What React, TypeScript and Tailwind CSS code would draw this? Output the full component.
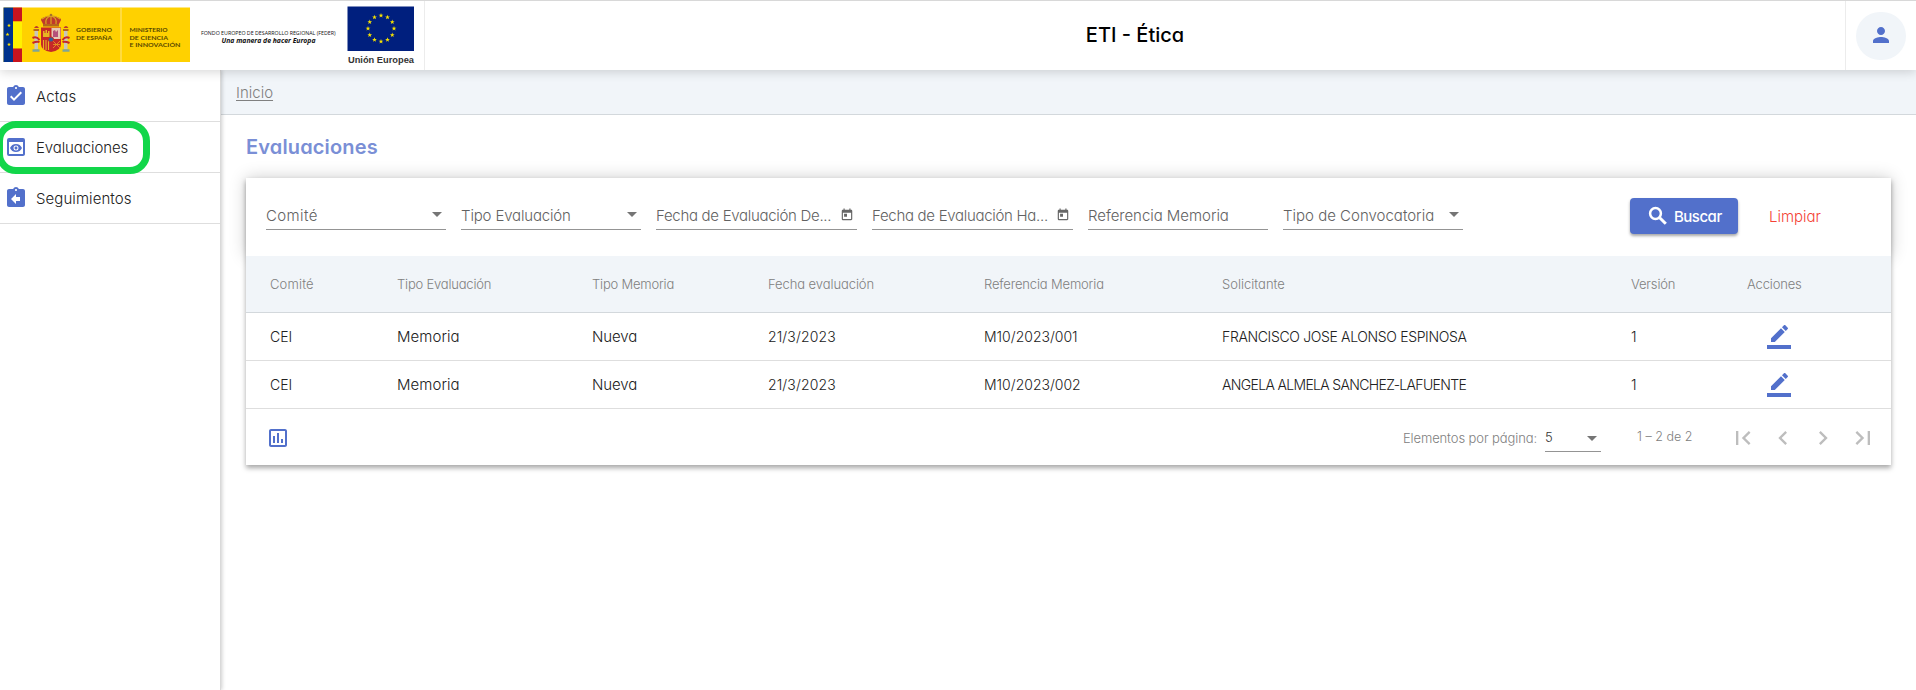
import React from "react";
import {
  MdAssignmentTurnedIn, MdPreview, MdAssignmentReturn, MdPerson, MdToday,
  MdOutlinePoll, MdFirstPage, MdChevronLeft, MdChevronRight, MdLastPage,
} from "react-icons/md";

const stars = Array.from({ length: 12 }, (_, i) => {
  const a = (i * Math.PI) / 6;
  return [191 + 13 * Math.sin(a), 28.5 - 13 * Math.cos(a)];
});

const star = (cx: number, cy: number, r: number) =>
  Array.from({ length: 10 }, (_, i) => {
    const a = (i * Math.PI) / 5;
    const q = i % 2 ? r * 0.42 : r;
    return `${cx + q * Math.sin(a)},${cy - q * Math.cos(a)}`;
  }).join(" ");

function GovernmentLogo() {
  return (
    <svg width="190" height="69" viewBox="0 1 190 69" className="shrink-0">
      <rect x="3.5" y="7.5" width="187" height="54.5" fill="#ffd100" />
      <rect x="3.5" y="7.5" width="9.5" height="54.5" fill="#00338d" />
      <rect x="13" y="7.5" width="9" height="14" fill="#c8141e" />
      <rect x="13" y="21.5" width="9" height="27" fill="#fff100" />
      <rect x="13" y="48.5" width="9" height="13.5" fill="#c8141e" />
      <polygon points={star(9, 25.5, 2)} fill="#ffe600" />
      <polygon points={star(7.5, 34.5, 2)} fill="#ffe600" />
      <polygon points={star(9, 44.5, 2)} fill="#ffe600" />
      <rect x="120.5" y="7.5" width="1" height="54.5" fill="#ffe680" />
      <g>
        <path d="M41 20c0-5 20-5 20 0l-2.500 5H43.500z" fill="#c0392b" />
        <path d="M42 19q9-7 18 0M46 24c-1-5 1-7 5-8c4 1 6 3 5 8M51 14v10" fill="none" stroke="#d9a520" strokeWidth="1.2" />
        <circle cx="51" cy="15" r="1.3" fill="#a8722a" />
        <rect x="43" y="24" width="16" height="2.5" fill="#b5651d" />
        <path d="M41 27.500h20v17q0 6-10 7.500q-10-1.500-10-7.500z" fill="#c62828" />
        <rect x="51.500" y="28" width="9" height="11" fill="#e6c9b4" />
        <path d="M53 37v-6l2-1l1 2l2-2v7z" fill="#b5527a" />
        <path d="M43 37v-6h1.500v2h1v-3h1.500v3h1v-2h1.500v6z" fill="#e8b422" />
        <path d="M43.500 40v9M46 40v10M48.500 40v10" stroke="#e8b422" strokeWidth="1.100" />
        <path d="M53 41l7 7M60 41l-7 7M53 44.500h7" stroke="#e8a022" strokeWidth=".8" />
        <circle cx="51" cy="39.500" r="2.600" fill="#2f6296" stroke="#c62828" />
        <rect x="34.500" y="31" width="3.500" height="18" fill="#c9c6b8" />
        <rect x="64" y="31" width="3.500" height="18" fill="#c9c6b8" />
        <path d="M33.500 31h5.500v-2h-5.500zM63 31h5.500v-2h-5.500z" fill="#b5651d" />
        <path d="M34 28q2.500-4 5 0zM63.500 28q2.500-4 5 0z" fill="#c0392b" />
        <path d="M32.500 38q4-2 7 2M32.500 43q4-2 7-1M69.500 38q-4-2-7 2M69.500 43q-4-2-7-1" fill="none" stroke="#c62828" strokeWidth="2" />
        <path d="M32.500 50.500h7M62.500 50.500h7" stroke="#7fa596" strokeWidth="2.500" />
      </g>
      <g fontFamily="Lato, sans-serif" fontSize="6.300" fontWeight="700" fill="#5b4a00">
        <text x="76" y="32.300" textLength="36" lengthAdjust="spacingAndGlyphs">GOBIERNO</text>
        <text x="76" y="39.500" textLength="36" lengthAdjust="spacingAndGlyphs">DE ESPAÑA</text>
        <text x="129.500" y="32.300" textLength="38" lengthAdjust="spacingAndGlyphs">MINISTERIO</text>
        <text x="129.500" y="39.500" textLength="38.500" lengthAdjust="spacingAndGlyphs">DE CIENCIA</text>
        <text x="129.500" y="46.700" textLength="51" lengthAdjust="spacingAndGlyphs">E INNOVACIÓN</text>
      </g>
    </svg>
  );
}

function EuropeLogo() {
  return (
    <svg width="234" height="69" viewBox="0 1 234 69" className="shrink-0">
      <text x="11" y="35" fontFamily="'Open Sans', sans-serif" fontSize="5.400" fontWeight="500" fill="#111" textLength="134.500" lengthAdjust="spacingAndGlyphs">
        FONDO EUROPEO DE DESARROLLO REGIONAL (FEDER)
      </text>
      <text x="31.500" y="43.200" fontFamily="'Open Sans', sans-serif" fontSize="6.800" fontWeight="700" fontStyle="italic" fill="#111" textLength="94" lengthAdjust="spacingAndGlyphs">
        Una manera de hacer Europa
      </text>
      <rect x="157.500" y="6.500" width="66.500" height="44.500" fill="#001f7e" />
      {stars.map(([x, y], i) => <polygon key={i} points={star(x, y, 2.5)} fill="#f5e100" />)}
      <text x="158" y="62.800" fontFamily="'Liberation Sans', sans-serif" fontSize="9" fontWeight="700" fill="#333" textLength="66" lengthAdjust="spacingAndGlyphs">
        Unión Europea
      </text>
    </svg>
  );
}

const Caret = () => (
  <svg width="10" height="5" viewBox="0 0 10 5" className="shrink-0"><path d="M0 0h10L5 5z" fill="#757575" /></svg>
);

const SearchIcon = () => (
  <svg viewBox="0 0 24 24" className="size-6" fill="none" stroke="currentColor" strokeWidth="2.5">
    <circle cx="9.500" cy="9.500" r="5.400" />
    <path d="M13.700 13.700L19.800 19.800" strokeWidth="3" />
  </svg>
);

const EditIcon = () => (
  <svg viewBox="0 0 24 24" className="ml-5 mt-3 size-6 self-start fill-[#5270cb]">
    <path d="M17.750 7L14 3.250l-10 10V17h3.750l10-10zm2.960-2.960a1 1 0 0 0 0-1.410L18.370.290a1 1 0 0 0-1.410 0L15 2.250 18.750 6l1.960-1.960z" />
    <path d="M0 20h24v4H0z" />
  </svg>
);

type FieldProps = { label: string; kind?: "select" | "date" | "text"; className: string };
function Field({ label, kind = "select", className }: FieldProps) {
  return (
    <div className={`flex h-[30px] items-center justify-between border-b border-[#949494] ${className}`}>
      <span className="whitespace-nowrap pt-0.5 text-[15px] leading-5 text-[#626262]">{label}</span>
      {kind === "select" && <span className="mr-1 flex"><Caret /></span>}
      {kind === "date" && <MdToday className="mr-[3px] mt-px size-[14px] text-[#666]" />}
    </div>
  );
}

const columns = "grid grid-cols-[127px_195px_176px_216px_238px_409px_116px_1fr] items-center pl-6";
const cellStyles = [
  "text-[14px]",
  "pt-0.5 text-[15px] tracking-[0.05px]",
  "pt-0.5 text-[15px] tracking-[-0.1px]",
  "text-[14px] tracking-[0.12px]",
  "text-[14px]",
  "text-[14px]",
  "text-[14px]",
];
const rows = [
  { cells: ["CEI", "Memoria", "Nueva", "21/3/2023", "M10/2023/001", "FRANCISCO JOSE ALONSO ESPINOSA", "1"], nameStyle: "tracking-[-0.35px]" },
  { cells: ["CEI", "Memoria", "Nueva", "21/3/2023", "M10/2023/002", "ANGELA ALMELA SANCHEZ-LAFUENTE", "1"], nameStyle: "tracking-[-0.66px]" },
];
const headers = [
  { label: "Comité", className: "tracking-[0.15px]" },
  { label: "Tipo Evaluación", className: "tracking-[-0.2px]" },
  { label: "Tipo Memoria", className: "tracking-[-0.2px]" },
  { label: "Fecha evaluación", className: "tracking-[-0.08px]" },
  { label: "Referencia Memoria", className: "tracking-[-0.16px]" },
  { label: "Solicitante", className: "tracking-normal" },
  { label: "Versión", className: "tracking-[-0.15px]" },
  { label: "Acciones", className: "tracking-[-0.15px]" },
];
const menu = [
  { label: "Actas", Icon: MdAssignmentTurnedIn, className: "tracking-[0.2px]" },
  { label: "Evaluaciones", Icon: MdPreview, className: "tracking-[-0.1px]" },
  { label: "Seguimientos", Icon: MdAssignmentReturn, className: "tracking-[0.08px]" },
];

export default function App() {
  return (
    <div className="flex h-[690px] flex-col overflow-hidden bg-white font-[Inter,sans-serif] font-light text-[#212121] [font-feature-settings:'cv11']">
      <header className="relative z-10 flex h-[70px] shrink-0 border-t border-[#d8d8d8] bg-white shadow-[0_2px_10px_rgba(0,0,0,0.16)]">
        <GovernmentLogo />
        <EuropeLogo />
        <h1 className="flex flex-1 items-center justify-center border-x border-[#ececec] pb-0.5 text-[20px] font-medium text-black">ETI - Ética</h1>
        <div className="flex w-[70px] items-center pl-[10px]">
          <div className="flex h-[48px] w-[50px] items-center justify-center rounded-full bg-[#f1f5f9]">
            <MdPerson className="mb-0.5 size-6 text-[#5270cb]" />
          </div>
        </div>
      </header>
      <div className="flex min-h-0 flex-1">
        <nav className="relative z-[1] w-[221px] shrink-0 border-r border-[#d9d9d9] bg-white pt-px shadow-[1px_0_4px_rgba(0,0,0,0.2)]">
          {menu.map(({ label, Icon, className }) => (
            <a key={label} className="flex h-[51px] items-center gap-2 border-b border-[#dedede] pl-1">
              <Icon className="size-6 text-[#5270cb]" />
              <span className={`pt-0.5 text-[15px] ${className}`}>{label}</span>
            </a>
          ))}
          <div className="absolute -left-1 top-[51px] h-[53px] w-[154px] rounded-[20px] border-[7px] border-[#12d64a]" />
        </nav>
        <main className="min-w-0 flex-1">
          <div className="flex h-[45px] items-center border-b border-[#d3d8dc] bg-[#f1f5f9] pl-[15px] pt-0.5 text-[15px] text-[#808080]">
            <a className="underline underline-offset-2">Inicio</a>
          </div>
          <h2 className="flex h-[63px] items-center pl-[25px] text-[20px] font-semibold tracking-[0.15px] text-[#7a8fd6]">Evaluaciones</h2>
          <section className="ml-[25px] h-[287px] w-[1645px] bg-white shadow-[0_3px_5px_rgba(0,0,0,0.35)]">
            <div className="flex h-[78px] items-start pl-5 pt-[22px] shadow-[0_0_16px_rgba(0,0,0,0.2)]">
              <div className="flex flex-1 gap-[15px]">
                <Field label="Comité" className="w-[180px] tracking-[0.4px]" />
                <Field label="Tipo Evaluación" className="w-[180px] tracking-[-0.16px]" />
                <Field label="Fecha de Evaluación De..." kind="date" className="w-[201px] tracking-[-0.3px]" />
                <Field label="Fecha de Evaluación Ha..." kind="date" className="w-[201px] tracking-[-0.3px]" />
                <Field label="Referencia Memoria" kind="text" className="w-[180px] tracking-[-0.04px]" />
                <Field label="Tipo de Convocatoria" className="w-[180px]" />
              </div>
              <button className="mr-[31px] mt-[-2px] flex h-9 w-[108px] items-center gap-1 rounded bg-[#5270cb] pl-4 text-[15px] font-medium tracking-[-0.5px] text-white shadow-[0_2px_3px_rgba(0,0,0,0.35)]">
                <SearchIcon /><span className="pt-0.5">Buscar</span>
              </button>
              <a className="mt-[7px] w-[122px] text-[15px] leading-5 text-[#f44336]">Limpiar</a>
            </div>
            <div className={`${columns} relative h-[57px] border-b border-[#d3d8dc] bg-[#f1f5f9] pt-px text-[13px] text-[#808080]`}>
              {headers.map((h) => <span key={h.label} className={h.className}>{h.label}</span>)}
            </div>
            {rows.map(({ cells, nameStyle }) => (
              <div key={cells[4]} className={`${columns} h-12 border-b border-[#dedede]`}>
                {cells.map((cell, i) => (
                  <span key={i} className={`${cellStyles[i]} ${i === 5 ? nameStyle : ""}`}>{cell}</span>
                ))}
                <EditIcon />
              </div>
            ))}
            <footer className="flex h-14 items-center pt-0.5 text-[13px] text-[#808080]">
              <MdOutlinePoll className="ml-5 size-6 text-[#5270cb]" />
              <span className="ml-auto pt-px tracking-[-0.1px]">Elementos por página:</span>
              <div className="ml-2 mt-px flex h-[27px] w-14 items-center justify-between border-b border-[#949494] pr-1 text-[#333]">5<Caret /></div>
              <span className="ml-[36px] w-[86px] pb-px text-[12.5px]">1 – 2 de 2</span>
              <div className="flex w-[168px] text-[#bdbdbd]">
                <span className="flex w-10 justify-center"><MdFirstPage className="size-7" /></span>
                <span className="flex w-10 justify-center"><MdChevronLeft className="size-7" /></span>
                <span className="flex w-10 justify-center"><MdChevronRight className="size-7" /></span>
                <span className="flex w-10 justify-center"><MdLastPage className="size-7" /></span>
              </div>
            </footer>
          </section>
        </main>
      </div>
    </div>
  );
}
